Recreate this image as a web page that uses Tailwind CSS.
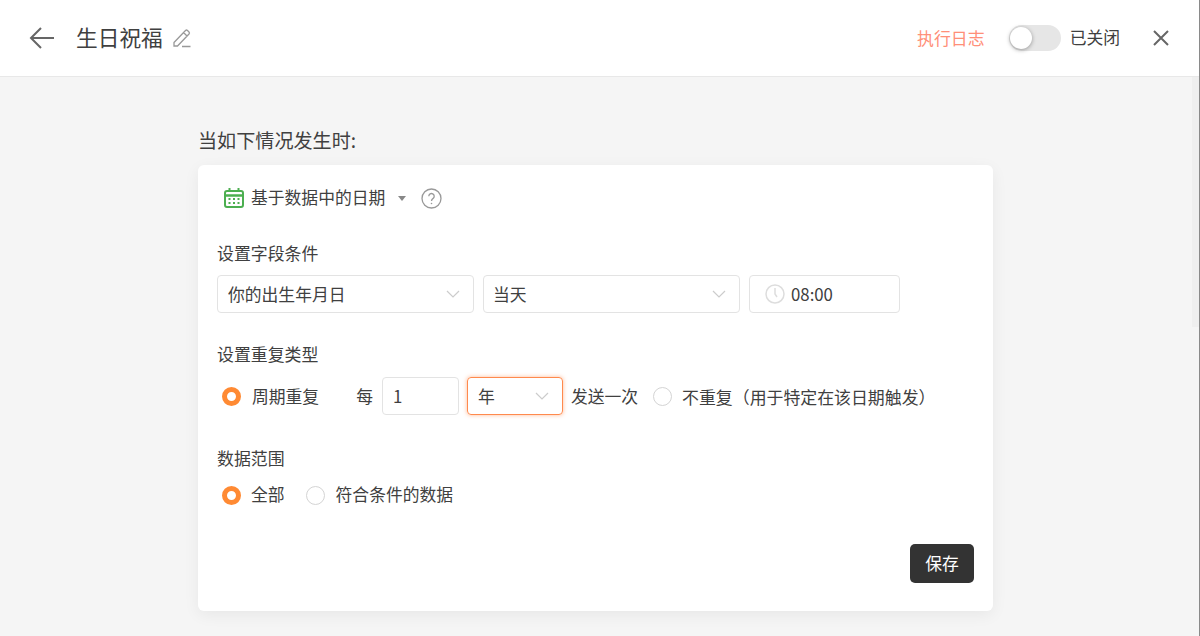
<!DOCTYPE html>
<html lang="zh"><head><meta charset="utf-8"><script src="https://cdn.jsdelivr.net/npm/@tailwindcss/browser@4"></script></head>
<body class="relative m-0 h-[636px] w-[1200px] overflow-hidden bg-[#f5f5f5] font-['Noto_Sans_CJK_SC','Noto_Sans',sans-serif] text-[16.8px] text-[#404040]">
<header class="flex h-[77px] items-center border-b border-[#e8e8e8] bg-white pl-[29px] pr-[30px]">
  <svg class="h-[24px] w-[26px] text-[#666]" viewBox="0 0 26 24" fill="none" stroke="currentColor" stroke-width="2"><path d="M25 12H2M12 2 2 12l10 10"/></svg>
  <div class="mb-[3px] ml-[21px] text-[21.7px] leading-none">生日祝福</div>
  <svg class="ml-[9px] h-[20px] w-[20px] text-[#999]" viewBox="0 0 20 20" fill="none" stroke="currentColor" stroke-width="1.3"><path d="M2 14.5 13.5 2.5a1.5 1.5 0 0 1 2 0l1.5 1.5a1.5 1.5 0 0 1 0 2L5.5 18H2zM11.5 4.5l3.5 3.5M10 18.5h8.5"/></svg>
  <div class="ml-auto text-[16.9px] text-[#ff8f78]">执行日志</div>
  <div class="ml-[24px] flex h-[26px] w-[52px] items-center rounded-full bg-[#e6e6e6] pl-[1px]"><div class="h-[22px] w-[22px] rounded-full bg-white shadow-[0_1px_4px_rgba(0,0,0,0.35)]"></div></div>
  <div class="ml-[9px]">已关闭</div>
  <svg class="ml-[32px] h-[18px] w-[18px] text-[#666]" viewBox="0 0 18 18" fill="none" stroke="currentColor" stroke-width="2"><path d="M2 2l14 14M16 2 2 16"/></svg>
</header>
<main class="ml-[198px] w-[795px]">
  <h2 class="mt-[50px] h-[28px] text-[19.1px] leading-[26px] font-normal">当如下情况发生时:</h2>
  <section class="mt-[10px] h-[446px] rounded-[6px] bg-white px-[19px] pt-[21px] shadow-[0_4px_16px_rgba(0,0,0,0.06)]">
    <div class="flex h-[24px] items-center pl-[7px]">
      <svg class="h-[22px] w-[20px] text-[#4caf50]" viewBox="0 0 20 22" fill="none" stroke="currentColor"><rect x="1" y="4" width="18" height="16" rx="2" stroke-width="2"/><path d="M1 8.5h18" stroke-width="2.5"/><path d="M5.500 1v4M14.500 1v4" stroke-width="2"/><path d="M4.500 12h2M9 12h2M13.500 12h2M4.500 16h2M9 16h2M13.500 16h2" stroke-width="1.800"/></svg>
      <span class="ml-[7px]">基于数据中的日期</span>
      <span class="ml-[13px] h-0 w-0 border-x-[4px] border-t-[5px] border-x-transparent border-t-[#888]"></span>
      <svg class="ml-[15px] h-[21px] w-[21px] text-[#999]" viewBox="0 0 21 21" fill="none" stroke="currentColor" stroke-width="1.300"><circle cx="10.500" cy="10.500" r="9.500"/><path d="M7.800 8.200a2.700 2.700 0 1 1 4.300 2.200c-1 .7-1.600 1.200-1.600 2.500"/><circle cx="10.500" cy="15.500" r=".8" fill="currentColor" stroke="none"/></svg>
    </div>
    <div class="mt-[31px] h-[24px] text-[16.9px] leading-[24px]">设置字段条件</div>
    <div class="mt-[10px] flex gap-[9px]">
      <div class="flex h-[38px] w-[257px] items-center justify-between rounded-[4px] border border-[#e3e3e3] pl-[10px] pr-[13px]"><span class="pt-[2px]">你的出生年月日</span><svg class="h-[8px] w-[14px] text-[#ccc]" viewBox="0 0 14 8" fill="none" stroke="currentColor" stroke-width="1.200"><path d="m1 1 6 6 6-6"/></svg></div>
      <div class="flex h-[38px] w-[257px] items-center justify-between rounded-[4px] border border-[#e3e3e3] pl-[10px] pr-[13px]"><span class="-ml-[1px] pt-[2px]">当天</span><svg class="h-[8px] w-[14px] text-[#ccc]" viewBox="0 0 14 8" fill="none" stroke="currentColor" stroke-width="1.200"><path d="m1 1 6 6 6-6"/></svg></div>
      <div class="flex h-[38px] w-[151px] items-center rounded-[4px] border border-[#e3e3e3] pl-[15px]"><svg class="h-[20px] w-[20px] text-[#ddd]" viewBox="0 0 20 20" fill="none" stroke="currentColor" stroke-width="1.500"><circle cx="10" cy="10" r="9"/><path d="M10 4v6l2 3"/></svg><span class="ml-[6px] pt-[2px]">08:00</span></div>
    </div>
    <div class="mt-[29px] h-[24px] text-[16.9px] leading-[24px]">设置重复类型</div>
    <div class="mt-[11px] flex h-[38px] items-center">
      <span class="ml-[5px] h-[19px] w-[19px] rounded-full border-[5px] border-[#ff8a33] bg-white"></span>
      <span class="ml-[11px] pt-[2px]">周期重复</span>
      <span class="ml-[37px] pt-[2px]">每</span>
      <div class="ml-[9px] flex h-[38px] w-[77px] items-center rounded-[4px] border border-[#e3e3e3] pl-[10px] pt-[2px]">1</div>
      <div class="ml-[8px] flex h-[38px] w-[96px] items-center justify-between rounded-[4px] border border-[#ff8a4d] pl-[10px] pr-[13px] shadow-[0_0_4px_rgba(255,138,77,0.6)]"><span class="pt-[2px]">年</span><svg class="h-[8px] w-[14px] text-[#ccc]" viewBox="0 0 14 8" fill="none" stroke="currentColor" stroke-width="1.200"><path d="m1 1 6 6 6-6"/></svg></div>
      <span class="ml-[8px] pt-[2px]">发送一次</span>
      <span class="ml-[15px] h-[19px] w-[19px] rounded-full border border-[#d4d4d4] bg-white"></span>
      <span class="ml-[10px] pt-[2px] text-[16.9px]">不重复（用于特定在该日期触发）</span>
    </div>
    <div class="mt-[31px] h-[24px] text-[16.9px] leading-[24px]">数据范围</div>
    <div class="mt-[12px] flex h-[26px] items-center">
      <span class="ml-[5px] h-[19px] w-[19px] rounded-full border-[5px] border-[#ff8a33] bg-white"></span>
      <span class="ml-[10px]">全部</span>
      <span class="ml-[21px] h-[19px] w-[19px] rounded-full border border-[#d4d4d4] bg-white"></span>
      <span class="ml-[11px]">符合条件的数据</span>
    </div>
    <div class="mt-[36px] flex justify-end">
      <div class="flex h-[39px] w-[64px] items-center justify-center rounded-[5px] bg-[#333] text-white">保存</div>
    </div>
  </section>
</main>
<div class="absolute right-[1px] top-[77px] h-[250px] w-[7px] bg-[#efefef]"></div>
<div class="absolute right-0 top-0 h-[636px] w-[1px] bg-[#8a8a8a]"></div>
</body></html>
